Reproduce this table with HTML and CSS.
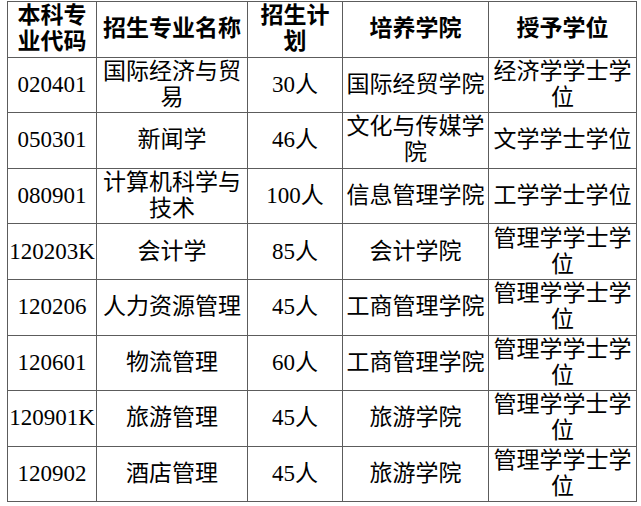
FILE: index.html
```html
<!DOCTYPE html>
<html lang="zh-CN">
<head>
<meta charset="utf-8">
<link rel="stylesheet" href="styles.css">
</head>
<body>
<table class="plan">
<colgroup>
<col class="c1"><col class="c2"><col class="c3"><col class="c4"><col class="c5">
</colgroup>
<thead>
<tr><th class="code">本科专业代码</th><th>招生专业名称</th><th>招生计划</th><th>培养学院</th><th>授予学位</th></tr>
</thead>
<tbody>
<tr><td class="code">020401</td><td>国际经济与贸易</td><td>30人</td><td>国际经贸学院</td><td>经济学学士学位</td></tr>
<tr><td class="code">050301</td><td>新闻学</td><td>46人</td><td>文化与传媒学院</td><td>文学学士学位</td></tr>
<tr><td class="code">080901</td><td>计算机科学与技术</td><td>100人</td><td>信息管理学院</td><td>工学学士学位</td></tr>
<tr><td class="code">120203K</td><td>会计学</td><td>85人</td><td>会计学院</td><td>管理学学士学位</td></tr>
<tr><td class="code">120206</td><td>人力资源管理</td><td>45人</td><td>工商管理学院</td><td>管理学学士学位</td></tr>
<tr><td class="code">120601</td><td>物流管理</td><td>60人</td><td>工商管理学院</td><td>管理学学士学位</td></tr>
<tr><td class="code">120901K</td><td>旅游管理</td><td>45人</td><td>旅游学院</td><td>管理学学士学位</td></tr>
<tr><td class="code">120902</td><td>酒店管理</td><td>45人</td><td>旅游学院</td><td>管理学学士学位</td></tr>
</tbody>
</table>
</body>
</html>
```
FILE: styles.css
```css
html, body {
  margin: 0;
  padding: 0;
  background: #ffffff;
}
body {
  padding: 1px 0 0 7px;
}
.plan {
  border-collapse: collapse;
  table-layout: fixed;
  width: 629px;
  font-family: "Liberation Serif", "Noto Sans CJK SC", serif;
  font-size: 23px;
  line-height: 26px;
  color: #000;
}
.plan .c1 { width: 89px; }
.plan .c2 { width: 151px; }
.plan .c3 { width: 95px; }
.plan .c4 { width: 146px; }
.plan .c5 { width: 148px; }
.plan th,
.plan td {
  border: 1px solid #5c5c5c;
  padding: 0 2px;
  height: 54.6px;
  text-align: center;
  vertical-align: middle;
}
.plan th {
  font-weight: bold;
}
.plan .code {
  padding: 0;
}
.plan td.code {
  white-space: nowrap;
}
```
